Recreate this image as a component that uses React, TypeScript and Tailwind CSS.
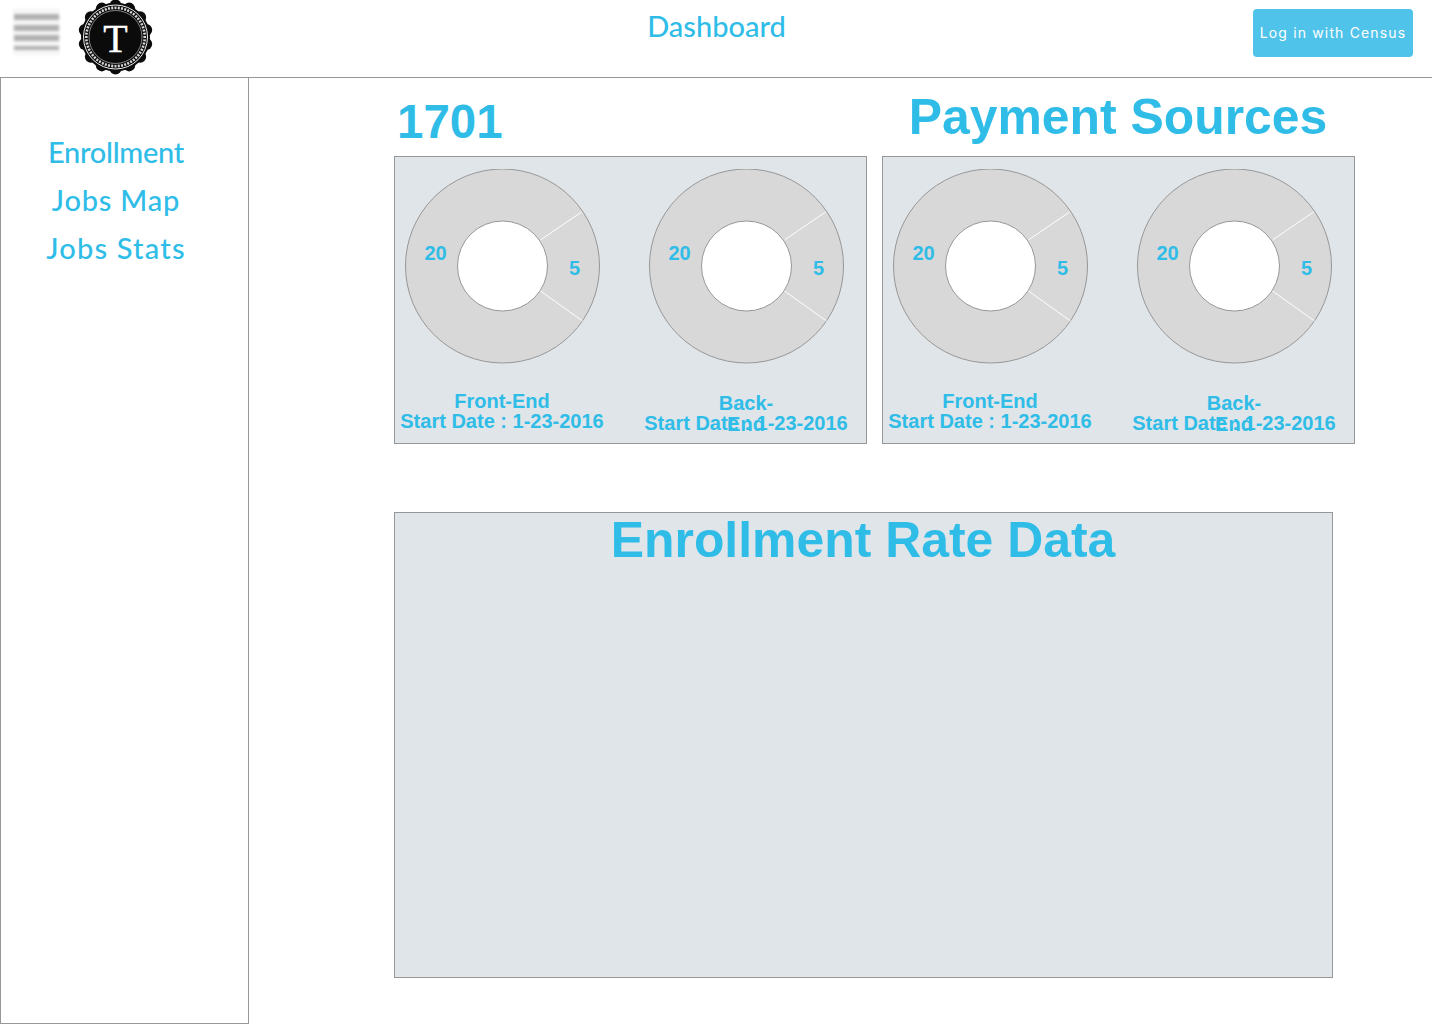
const donutFont = { fontFamily: '"Liberation Sans", Arial, sans-serif' };

function Donut() {
  return (
    <svg width="196" height="196" viewBox="0 0 196 196" className="shrink-0">
      <circle cx="97.5" cy="97" r="97" fill="#d8d8d8" stroke="#979797" strokeWidth="1" />
      <circle cx="97.5" cy="97" r="45" fill="#ffffff" stroke="#979797" strokeWidth="1" />
      <line x1="135.5" y1="71" x2="176.5" y2="43" stroke="#ffffff" strokeWidth="1" />
      <line x1="135.5" y1="122" x2="177.5" y2="152" stroke="#ffffff" strokeWidth="1" />
      <text x="30.5" y="91" textAnchor="middle" fontSize="20" fontWeight="700" fill="#2fbde8" style={donutFont}>20</text>
      <text x="169.5" y="106" textAnchor="middle" fontSize="20" fontWeight="700" fill="#2fbde8" style={donutFont}>5</text>
    </svg>
  );
}

function Track({ name, shifted }: { name: string; shifted?: boolean }) {
  return (
    <div className="flex w-[196px] flex-col items-center">
      <Donut />
      <div className={`-ml-[2px] flex flex-col items-center whitespace-nowrap text-[20px] leading-[20px] font-bold text-[#2fbde8] ${shifted ? "mt-[28px]" : "mt-[26px]"}`}>
        <div className={shifted ? "h-5 w-[70px] whitespace-normal text-center leading-[21px]" : "h-5"}>{name}</div>
        <div>Start Date : 1-23-2016</div>
      </div>
    </div>
  );
}

function Panel() {
  return (
    <div className="flex h-[288px] w-[473px] gap-[48px] border border-[#979797] bg-[#e0e5e9] pt-[12px] pl-[10px]">
      <Track name="Front-End" />
      <Track name="Back-End" shifted />
    </div>
  );
}

function Logo() {
  const teeth = Array.from({ length: 14 }, (_, i) => (i * 360) / 14);
  const dots = Array.from({ length: 56 }, (_, i) => (i * 360) / 56);
  return (
    <svg width="76" height="76" viewBox="0 0 76 76" className="ml-[18px] shrink-0">
      <circle cx="37.5" cy="37" r="34.5" fill="#0b0b0b" />
      {teeth.map((a) => (
        <circle key={a} cx={37.5 + 31.5 * Math.cos(((a + 90) * Math.PI) / 180)} cy={37 + 31.5 * Math.sin(((a + 90) * Math.PI) / 180)} r="6" fill="#0b0b0b" />
      ))}
      <circle cx="37.5" cy="37" r="32" fill="none" stroke="#eeeeee" strokeWidth="1" />
      {dots.map((a) => (
        <rect key={a} x="65.4" y="36" width="2.6" height="2" fill="#d8d8d8" transform={`rotate(${a} 37.5 37)`} />
      ))}
      <circle cx="37.5" cy="37" r="26.5" fill="none" stroke="#b8b8b8" strokeWidth="0.7" />
      <text x="37.5" y="52" textAnchor="middle" fontSize="40" fill="#ffffff" stroke="#ffffff" strokeWidth="0.4" style={{ fontFamily: '"Liberation Serif", serif' }}>T</text>
    </svg>
  );
}

function Hamburger() {
  return (
    <div className="ml-[13px] flex h-[48px] w-[47px] shrink-0 flex-col justify-between bg-[#f7f7f7] px-[1px] py-[6px] blur-[1.5px]">
      <div className="h-[6px] bg-[#b0b0b0]" />
      <div className="h-[6px] bg-[#b0b0b0]" />
      <div className="h-[6px] bg-[#b0b0b0]" />
      <div className="h-[4px] bg-[#b0b0b0]" />
    </div>
  );
}

export default function App() {
  const hand = "font-['Lato',sans-serif] font-medium text-[#2fbde8]";
  return (
    <div className="min-h-[1024px] w-[1432px] bg-white font-['Liberation_Sans',Arial,sans-serif]">
      <header className="flex h-[78px] items-start border-b border-[#979797]">
        <div className="mt-[8px]"><Hamburger /></div>
        <Logo />
        <div className={`${hand} mt-[6px] ml-[493px] w-[139px] text-center text-[29px] leading-[40px] whitespace-nowrap`}>
          Dashboard
        </div>
        <button className="mt-[9px] mr-[19px] ml-auto h-[48px] w-[160px] rounded-[4px] bg-[#4fc3ea] pb-[2px] text-center font-['Inter',sans-serif] text-[14px] tracking-[1.15px] text-white">
          Log in with Census
        </button>
      </header>
      <div className="flex">
        <aside className="h-[947px] w-[249px] shrink-0 -mt-px border border-[#979797] pt-[50px]">
          <nav className={`${hand} flex w-[230px] flex-col items-center text-[29px] leading-[48px]`}>
            <span className="tracking-[-0.3px]">Enrollment</span>
            <span className="tracking-[0.8px]">Jobs Map</span>
            <span className="tracking-[1.2px]">Jobs Stats</span>
          </nav>
        </aside>
        <main className="pl-[145px]">
          <div className="flex h-[78px] font-bold text-[#2fbde8]">
            <div className="w-[488px] pt-[15px] pl-[3px] text-[47.5px] leading-[58px]">1701</div>
            <div className="w-[473px] pt-[10px] pr-px text-center text-[49.9px] leading-[58px]">Payment Sources</div>
          </div>
          <div className="flex gap-[15px]">
            <Panel />
            <Panel />
          </div>
          <section className="mt-[68px] h-[466px] w-[939px] border border-[#979797] bg-[#e0e5e9] pr-px text-center text-[49.9px] leading-[54px] font-bold text-[#2fbde8]">
            Enrollment Rate Data
          </section>
        </main>
      </div>
    </div>
  );
}
